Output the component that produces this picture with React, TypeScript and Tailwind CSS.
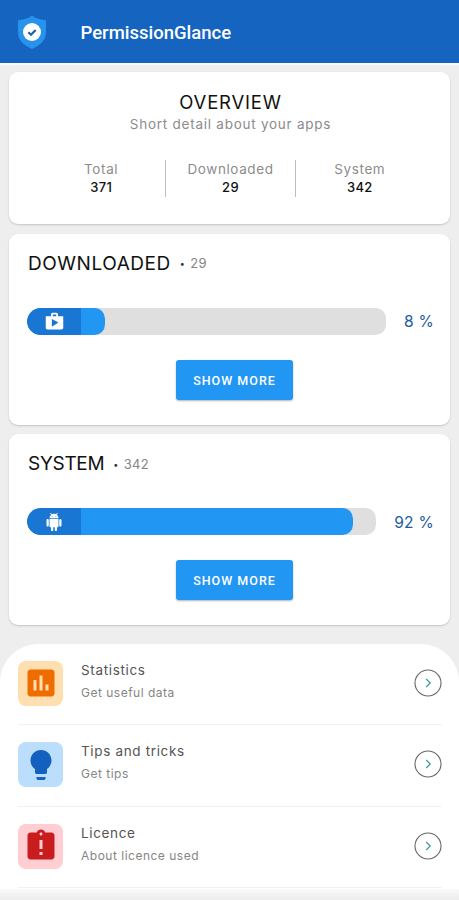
import type { ReactNode } from "react";
import { MdAssessment, MdAssignmentLate, MdLightbulb, MdShop } from "react-icons/md";

const links = [
  {
    title: "Statistics",
    detail: "Get useful data",
    icon: <MdAssessment className="size-9 text-[#ef6c00]" />,
    tile: "bg-[#ffdfb0]",
  },
  {
    title: "Tips and tricks",
    detail: "Get tips",
    icon: <MdLightbulb className="size-9 text-[#1460bf]" />,
    tile: "bg-[#badefb]",
  },
  {
    title: "Licence",
    detail: "About licence used",
    icon: <MdAssignmentLate className="size-9 text-[#c81c1e]" />,
    tile: "bg-[#ffcdd2]",
  },
];

function Logo() {
  return (
    <svg viewBox="0 0 30 36" className="h-9 w-[30px]">
      <path
        d="M15 1.5c3.500 2.800 8.500 4.500 14 4.800v12.200c0 8-6.200 13-14 16.500C7.200 31.500 1 26.500 1 18.500V6.300C6.500 6 11.500 4.300 15 1.500z"
        fill="#2793ed"
      />
      <circle cx="15" cy="18" r="9" fill="#fff" />
      <path d="M11.300 18.300l2.700 2.500 4.700-4.900" fill="none" stroke="#1c62ad" strokeWidth="2.200" />
    </svg>
  );
}

function Robot() {
  return (
    <svg viewBox="0 0 24 24" className="size-[18px]" fill="currentColor">
      <path d="M6 18c0 .55.45 1 1 1h1v3.500c0 .83.67 1.500 1.500 1.500s1.500-.67 1.500-1.500V19h2v3.500c0 .83.67 1.500 1.500 1.500s1.500-.67 1.500-1.500V19h1c.55 0 1-.45 1-1V8H6v10zM3.500 8C2.670 8 2 8.670 2 9.500v7c0 .83.67 1.500 1.500 1.500S5 17.330 5 16.500v-7C5 8.670 4.330 8 3.500 8zm17 0c-.83 0-1.500.67-1.500 1.500v7c0 .83.67 1.500 1.500 1.500s1.500-.67 1.500-1.500v-7c0-.83-.67-1.500-1.500-1.500zm-4.970-5.840l1.300-1.300c.2-.2.2-.51 0-.71-.2-.2-.51-.2-.71 0l-1.480 1.480C13.850 1.230 12.950 1 12 1c-.96 0-1.860.23-2.660.63L7.850.15c-.2-.2-.51-.2-.71 0-.2.2-.2.51 0 .71l1.310 1.310C6.970 3.260 6 5.010 6 7h12c0-1.990-.97-3.750-2.470-4.840zM10 5H9V4h1v1zm5 0h-1V4h1v1z" />
    </svg>
  );
}

function Stat({ label, value }: { label: string; value: number }) {
  return (
    <div className="flex flex-1 flex-col items-center leading-[18px]">
      <span className="text-[13.500px] tracking-[0.600px] text-[#8c8c8c]">{label}</span>
      <span className="text-[13px] font-medium tracking-[0.300px] text-[#111]">{value}</span>
    </div>
  );
}

interface UsageCardProps {
  title: string;
  titleClass: string;
  count: number;
  percent: number;
  icon: ReactNode;
}

function UsageCard({ title, titleClass, count, percent, icon }: UsageCardProps) {
  return (
    <section className="mx-[9px] mt-[9.500px] h-[191px] shrink-0 rounded-[9px] bg-white pl-[18px] pr-[16px] pt-[19px] shadow-[0_1px_2px_rgba(0,0,0,0.18)]">
      <div className="flex h-[22px] items-center">
        <h2 className={`ml-px mt-px text-[19px] text-[#111] ${titleClass}`}>{title}</h2>
        <span className="ml-[9px] mt-px flex items-center text-[13px] tracking-[0.300px] text-[#858585]">
          <span className="mr-[5px] text-[9px] text-[#333]">•</span>
          {count}
        </span>
      </div>
      <div className="mt-[33px] flex h-[27px] items-center">
        <div className="h-[27px] flex-1 overflow-hidden rounded-l-[14px] rounded-r-[11px] bg-[#dfdfdf]">
          <div
            className="h-full min-w-[78px] overflow-hidden rounded-l-[14px] rounded-r-[11px] bg-[#2196f3]"
            style={{ width: `${percent + 1.3}%` }}
          >
            <div className="flex h-full w-[54px] items-center justify-center bg-[#1976d2] text-white">{icon}</div>
          </div>
        </div>
        <span className="ml-[18px] mt-[2px] whitespace-nowrap text-[15.500px] tracking-[0.300px] text-[#1c5ba0]">
          {percent} %
        </span>
      </div>
      <button className="ml-[149px] mt-[25px] block h-10 w-[117px] rounded-[3px] bg-[#2196f3] pt-[3px] font-['Roboto',sans-serif] text-[12.500px] font-medium tracking-[1px] text-white shadow-[0_1px_2px_rgba(0,0,0,0.3)]">
        SHOW MORE
      </button>
    </section>
  );
}

export default function App() {
  return (
    <div className="flex h-[900px] w-full flex-col overflow-hidden bg-[#eeeeee] font-['Inter',sans-serif]">
      <header className="flex h-[63px] shrink-0 items-center bg-[#1565c0] pl-[17px] shadow-[0_2px_1px_#fafafa]">
        <Logo />
        <h1 className="ml-[33.500px] mt-[4px] font-['Roboto',sans-serif] text-[18.500px] font-medium text-white">
          PermissionGlance
        </h1>
      </header>

      <section className="mx-[9px] mt-[9px] h-[152px] shrink-0 rounded-[9px] bg-white pt-[19px] text-center shadow-[0_1px_2px_rgba(0,0,0,0.18)]">
        <h2 className="pl-[2px] text-[18.500px] leading-[22px] tracking-[0.800px] text-[#111]">OVERVIEW</h2>
        <p className="pl-[2px] text-[13.500px] leading-[22px] tracking-[0.750px] text-[#8c8c8c]">
          Short detail about your apps
        </p>
        <div className="ml-[28px] mr-[26px] mt-[25px] flex h-[37px]">
          <Stat label="Total" value={371} />
          <div className="w-px bg-[#bdbdbd]" />
          <Stat label="Downloaded" value={29} />
          <div className="w-px bg-[#bdbdbd]" />
          <Stat label="System" value={342} />
        </div>
      </section>

      <UsageCard
        title="DOWNLOADED"
        titleClass="tracking-[0.550px]"
        count={29}
        percent={8}
        icon={<MdShop className="size-[21px]" />}
      />
      <UsageCard title="SYSTEM" titleClass="tracking-[-0.300px]" count={342} percent={92} icon={<Robot />} />

      <nav className="mt-[18.500px] min-h-0 flex-1 rounded-t-[38px] bg-white pl-[18px] pr-[17.500px] pt-[17px]">
        {links.map((link) => (
          <a key={link.title} className="mb-[17px] flex h-[64.500px] border-b border-[#f0f0f0] last:mb-0">
            <div className={`flex size-[45px] items-center justify-center rounded-[8px] ${link.tile}`}>{link.icon}</div>
            <div className="ml-[18px] flex-1">
              <h3 className="text-[13.500px] leading-[18px] tracking-[0.650px] text-[#555]">{link.title}</h3>
              <p className="mt-[5px] text-[12px] leading-[18px] tracking-[0.500px] text-[#858585]">{link.detail}</p>
            </div>
            <svg viewBox="0 0 28 28" className="mt-[8px] size-7" fill="none">
              <circle cx="14" cy="14" r="13" stroke="#666" strokeWidth="1.100" />
              <path d="M12.200 10l4 4-4 4" stroke="#3c9a9e" strokeWidth="1.200" />
            </svg>
          </a>
        ))}
      </nav>
      <div className="-mt-[11px] h-[11px] shrink-0 bg-linear-to-b from-[#f9f9f9] to-[#ececec]" />
    </div>
  );
}
